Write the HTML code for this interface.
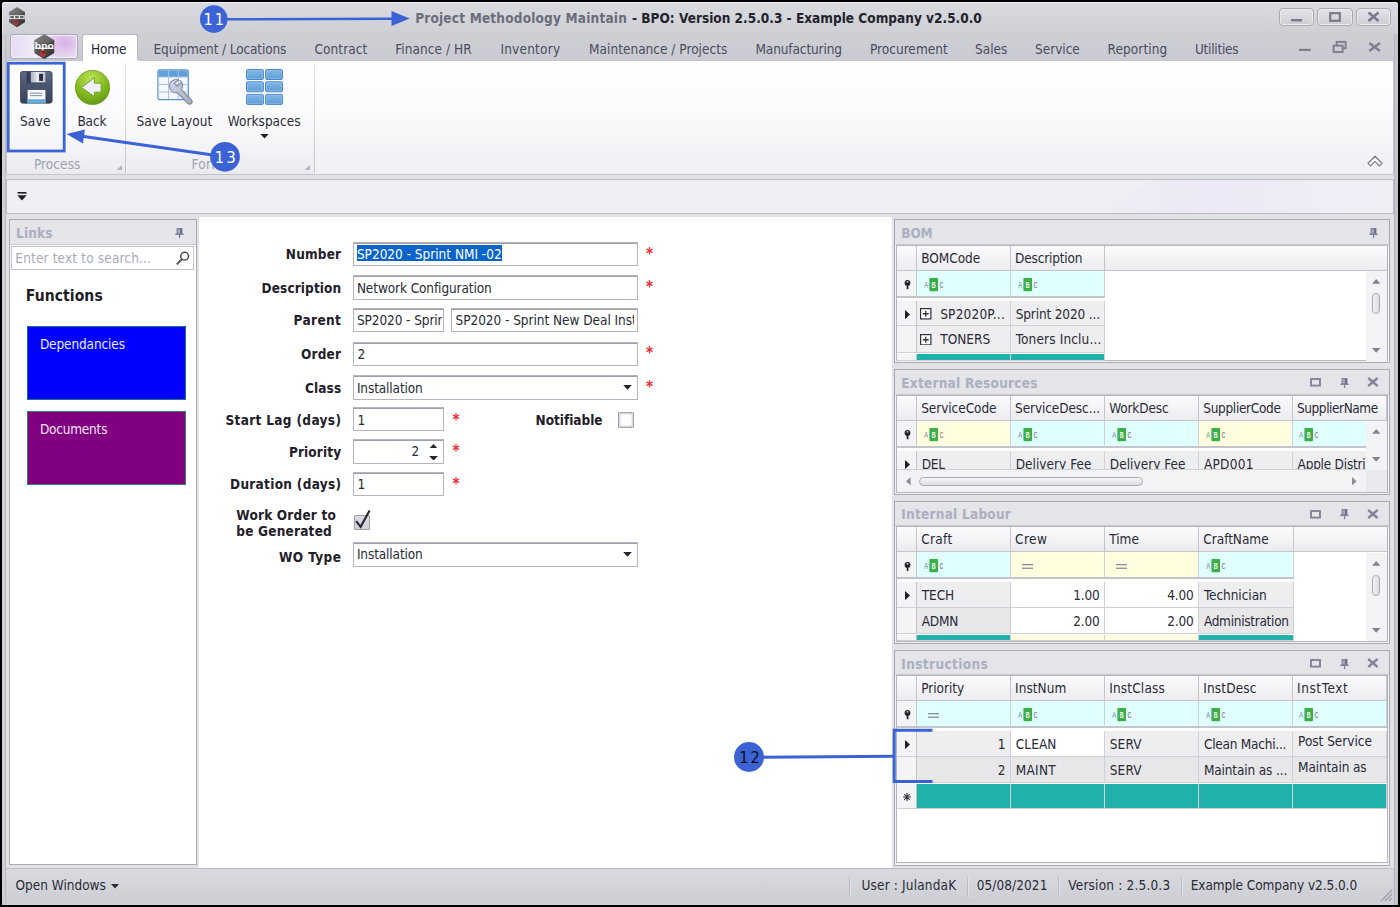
<!DOCTYPE html>
<html lang="en"><head><meta charset="utf-8"><title>Project Methodology Maintain - BPO</title>
<style>
*{box-sizing:border-box;margin:0;padding:0}
html,body{width:1400px;height:907px;overflow:hidden;background:#000}
body{font:13.5px/16px "DejaVu Sans Condensed","DejaVu Sans","Liberation Sans",sans-serif;font-stretch:condensed;color:#2a2b35;position:relative}
.a{position:absolute}
.t{position:absolute;white-space:pre;line-height:16px}
.b{font-weight:700}
.inp{background:#fff;border:1px solid #b3b4bf;box-shadow:inset 0 1px 0 #9fa0ab}
.ph{background:#e4e4e9;border-bottom:1px solid #c9cad1}
.pn{background:#f3f3f6;border:1px solid #a9aab3}
.gh{background:linear-gradient(#fbfbfd,#ececf0);border-right:1px solid #c3c4cc;border-bottom:1px solid #c3c4cc}
.cy{background:#e0ffff}.ye{background:#ffffe0}.tl{background:#20b2aa}
.c0{background:#eeeef1}.c1{background:#e7e7ea}.cw{background:#fff}
.cell{border-right:1px solid #cfd0d7;border-bottom:1px solid #cfd0d7}
</style></head>
<body>
<div id="win" class="a " style="left:2px;top:2px;width:1395.6px;height:902.6px;background:#cfd0d6;border-radius:3px 3px 0 0;overflow:hidden">
<div class="a " style="left:0px;top:0px;width:1396px;height:32px;background:linear-gradient(#dadbe0,#cecfd5)"></div>
<div class="a " style="left:0px;top:32px;width:1396px;height:27px;background:linear-gradient(#cecfd5,#cacbd2)"></div>
<div class="a " style="left:0px;top:0px;width:1396px;height:1px;background:#f0f1f4"></div>
<div class="a " style="left:0px;top:0px;width:1px;height:903px;background:#e6e7eb"></div>
<div class="a " style="left:1391.5px;top:32px;width:4.5px;height:871px;background:#c4c5cc;border-left:1px solid #b4b5bd"></div>
<div class="a " style="left:0px;top:32px;width:4px;height:871px;background:#cfd0d6;border-right:1px solid #b9bac2"></div>
<div class="a " style="left:4px;top:172.5px;width:1388px;height:693.5px;background:#e1e2e6"></div>
</div>
<div id="title" class="a " style="left:2px;top:2px;width:1396px;height:32px;">
<svg class="a" style="left:6.4px;top:5.2px" width="18" height="20.4" viewBox="0 0 100 100" preserveAspectRatio="none"><defs><linearGradient id="hxa" x1="0" y1="0" x2="1" y2="1"><stop offset="0" stop-color="#8c8c8c"/><stop offset=".45" stop-color="#505050"/><stop offset="1" stop-color="#303030"/></linearGradient></defs><polygon points="50,1 94,25 94,75 50,99 6,75 6,25" fill="url(#hxa)"/><polygon points="50,1 94,25 50,42 6,25" fill="#7d7d7d" opacity=".5"/><rect x="7" y="40" width="86" height="19" fill="#e4e4e4"/><rect x="13" y="44.500" width="19" height="10" fill="#5a5a5a"/><rect x="40" y="44.500" width="19" height="10" fill="#5a5a5a"/><rect x="67" y="44.500" width="19" height="10" fill="#5a5a5a"/><path d="M30 64h26v22l-10 6-16-8z" fill="#a83a3c"/><path d="M40 66l6 10 6-10" stroke="#5c2022" stroke-width="4" fill="none"/></svg>
<span class="t b" style="left:413.2px;top:7.63px;letter-spacing:0.197px;color:#6b6c7a;">Project Methodology Maintain</span>
<span class="t b" style="left:630px;top:7.63px;letter-spacing:0.018px;color:#23232d;">- BPO: Version 2.5.0.3 - Example Company v2.5.0.0</span>
<div class="a " style="left:1276.5px;top:6px;width:35px;height:18px;border:1px solid #a9aab5;border-radius:4px;background:linear-gradient(#e3e4e9,#cdced5);box-shadow:inset 0 0 0 1px #ebecf0"></div>
<svg class="a" style="left:1276.5px;top:6px" width="35" height="18" viewBox="0 0 35 18"><rect x="12" y="11" width="11" height="2.4" fill="#787989"/></svg>
<div class="a " style="left:1315px;top:6px;width:35.5px;height:18px;border:1px solid #a9aab5;border-radius:4px;background:linear-gradient(#e3e4e9,#cdced5);box-shadow:inset 0 0 0 1px #ebecf0"></div>
<svg class="a" style="left:1315px;top:6px" width="35.5" height="18" viewBox="0 0 35.5 18"><rect x="13.2" y="5.2" width="9.6" height="7.6" fill="none" stroke="#787989" stroke-width="2.2"/></svg>
<div class="a " style="left:1353.5px;top:6px;width:35px;height:18px;border:1px solid #a9aab5;border-radius:4px;background:linear-gradient(#e3e4e9,#cdced5);box-shadow:inset 0 0 0 1px #ebecf0"></div>
<svg class="a" style="left:1353.5px;top:6px" width="35" height="18" viewBox="0 0 35 18"><path d="M12.5 4.5l10 8.5M22.5 4.5l-10 8.5" stroke="#787989" stroke-width="2.6" fill="none"/></svg>
</div>
<div id="tabs" class="a " style="left:2px;top:34px;width:1396px;height:27px;">
<div class="a " style="left:7.6px;top:0.4px;width:68.6px;height:24.6px;border:1px solid #a9a9b6;border-radius:3px;background:radial-gradient(ellipse 22px 16px at 82% 35%,#d9b4e6,rgba(217,180,230,0) 100%),linear-gradient(100deg,#e4dbf2,#f1ecf8 40%,#e6d6f0 70%,#ece4f6);box-shadow:inset 0 0 0 1px #f3eef8"></div>
<svg class="a" style="left:30.6px;top:-0.4px" width="22.6" height="25.4" viewBox="0 0 100 100" preserveAspectRatio="none"><defs><linearGradient id="hxb" x1="0" y1="0" x2="1" y2="1"><stop offset="0" stop-color="#8c8c8c"/><stop offset=".45" stop-color="#505050"/><stop offset="1" stop-color="#303030"/></linearGradient></defs><polygon points="50,1 94,25 94,75 50,99 6,75 6,25" fill="url(#hxb)"/><polygon points="50,1 94,25 50,42 6,25" fill="#7d7d7d" opacity=".5"/><text x="50" y="59" font-family="Liberation Sans,DejaVu Sans,sans-serif" font-weight="700" font-size="34" fill="#fff" text-anchor="middle" textLength="84" lengthAdjust="spacingAndGlyphs">bpo</text><rect x="8" y="54" width="84" height="4.500" fill="#fff"/><path d="M30 64h26v22l-10 6-16-8z" fill="#a83a3c"/><path d="M40 66l6 10 6-10" stroke="#5c2022" stroke-width="4" fill="none"/></svg>
<div class="a " style="left:80px;top:0.2px;width:56.3px;height:26.8px;background:#fff;border:1px solid #b9bac3;border-bottom:none;border-radius:3px 3px 0 0"></div>
<span class="t" style="left:89px;top:7.03px;letter-spacing:-0.144px;color:#26273f;">Home</span>
<span class="t" style="left:151.5px;top:7.03px;letter-spacing:-0.125px;color:#4b4c5e;">Equipment / Locations</span>
<span class="t" style="left:312.4px;top:7.03px;letter-spacing:0.094px;color:#4b4c5e;">Contract</span>
<span class="t" style="left:393.2px;top:7.03px;letter-spacing:0.061px;color:#4b4c5e;">Finance / HR</span>
<span class="t" style="left:498.4px;top:7.03px;letter-spacing:0.209px;color:#4b4c5e;">Inventory</span>
<span class="t" style="left:587.1px;top:7.03px;letter-spacing:0.015px;color:#4b4c5e;">Maintenance / Projects</span>
<span class="t" style="left:753.5px;top:7.03px;letter-spacing:-0.119px;color:#4b4c5e;">Manufacturing</span>
<span class="t" style="left:867.9px;top:7.03px;letter-spacing:0.034px;color:#4b4c5e;">Procurement</span>
<span class="t" style="left:973px;top:7.03px;letter-spacing:-0.009px;color:#4b4c5e;">Sales</span>
<span class="t" style="left:1033px;top:7.03px;letter-spacing:-0.013px;color:#4b4c5e;">Service</span>
<span class="t" style="left:1105.5px;top:7.03px;letter-spacing:0.091px;color:#4b4c5e;">Reporting</span>
<span class="t" style="left:1193px;top:7.03px;letter-spacing:-0.269px;color:#4b4c5e;">Utilities</span>
<svg class="a" style="left:1293px;top:4px" width="95" height="18" viewBox="0 0 95 18"><rect x="4" y="10.8" width="11.6" height="2.2" fill="#7d7e8e"/><g fill="none" stroke="#7d7e8e" stroke-width="1.9"><rect x="41.6" y="3.9" width="9" height="6.4"/><rect x="38.6" y="7.6" width="9" height="6.4" fill="#cccdd3"/></g><path d="M74.3 5l10.6 8M84.9 5l-10.6 8" stroke="#7d7e8e" stroke-width="2.3" fill="none"/></svg>
</div>
<div id="ribbon" class="a " style="left:6px;top:60px;width:1388px;height:114.5px;background:linear-gradient(#ffffff,#fbfbfd 45%,#efeff4);border:1px solid #c3c4cc">
<div class="a " style="left:76px;top:-1px;width:54.5px;height:1px;background:#fff"></div>
<div class="a " style="left:0px;top:92.5px;width:118px;height:20.5px;background:linear-gradient(#f1f1f5,#eaeaf0)"></div>
<div class="a " style="left:119.5px;top:92.5px;width:187.5px;height:20.5px;background:linear-gradient(#f1f1f5,#eaeaf0)"></div>
<div class="a " style="left:118.2px;top:2px;width:1px;height:110px;background:linear-gradient(#e4e4ea,#c2c3cb)"></div>
<div class="a " style="left:307px;top:2px;width:1px;height:110px;background:linear-gradient(#e4e4ea,#c2c3cb)"></div>
<svg class="a" style="left:13px;top:10px" width="32.5" height="32.6" viewBox="0 0 32 32"><defs><linearGradient id="fl" x1="0" y1="0" x2="0" y2="1"><stop offset="0" stop-color="#5e6a86"/><stop offset=".45" stop-color="#4a5570"/><stop offset="1" stop-color="#38425a"/></linearGradient>
<linearGradient id="fm" x1="0" y1="0" x2="1" y2="0"><stop offset="0" stop-color="#aab0bd"/><stop offset=".45" stop-color="#e9ebf0"/><stop offset="1" stop-color="#c5c9d3"/></linearGradient></defs>
<rect x="0.4" y="0.4" width="31.2" height="31.2" rx="2.3" fill="url(#fl)" stroke="#333c52" stroke-width=".8"/>
<rect x="6.4" y="0.8" width="18.6" height="11.2" fill="#333d55"/><rect x="10.6" y="0.8" width="14.4" height="10.4" fill="url(#fm)"/><rect x="18.8" y="2.7" width="3.9" height="7" fill="#2a3146"/>
<rect x="7.5" y="18.6" width="17.5" height="13" fill="#f5f7fb"/><rect x="7.5" y="27.8" width="17.5" height="3.8" fill="#60a9da"/><rect x="10" y="21.2" width="12" height="1.1" fill="#8e97b3"/><rect x="10" y="23.6" width="12" height="1.1" fill="#8e97b3"/></svg>
<svg class="a" style="left:68px;top:8.9px" width="35" height="35" viewBox="0 0 35 35"><defs><radialGradient id="gb" cx=".45" cy=".25" r=".8"><stop offset="0" stop-color="#bde25a"/><stop offset=".55" stop-color="#86bd22"/><stop offset="1" stop-color="#5f9311"/></radialGradient></defs>
<circle cx="17.5" cy="17.5" r="17.1" fill="url(#gb)" stroke="#6a9c18" stroke-width=".8"/><path d="M6.5 17.5L19.4 7.7V13.2H26.1V22.2H19.4V26.6Z" fill="#eef1fa" stroke="#6b9b1b" stroke-width=".9" stroke-linejoin="round"/></svg>
<svg class="a" style="left:150px;top:7.5px" width="36" height="36" viewBox="0 0 36 36"><defs><linearGradient id="wr" x1="0" y1="0" x2="1" y2="1"><stop offset="0" stop-color="#d3d9e4"/><stop offset="1" stop-color="#a4adbf"/></linearGradient></defs>
<rect x="0.9" y="0.9" width="30.4" height="29.8" rx="1.8" fill="#f4f7fc" stroke="#5f8fcc" stroke-width="1.2"/><path d="M1.5 2.3a.9 .9 0 0 1 .9-.9H29.8a.9 .9 0 0 1 .9 .9V8H1.5z" fill="#5f9fdc"/>
<path d="M11.6 1.5V30M21.3 1.5V30M1.5 8H30.7M1.5 15.5H30.7M1.5 23H30.7" stroke="#a9c1e2" stroke-width="1"/>
<path d="M24.6 13.2a6.6 6.6 0 1 0 -4.300 10.400L30.800 34.400a2.500 2.500 0 0 0 3.600 -3.600L24.100 20.300a6.600 6.600 0 0 0 .500 -7.100L20.400 17.300L17.300 14.300L21.600 10.400" fill="url(#wr)" stroke="#7d879c" stroke-width="1.1" stroke-linejoin="round"/></svg>
<svg class="a" style="left:239.3px;top:7.8px" width="37" height="36.5" viewBox="0 0 37 36.5"><defs><linearGradient id="wg" x1="0" y1="0" x2="0" y2="1"><stop offset="0" stop-color="#86b9e6"/><stop offset="1" stop-color="#5a9bd6"/></linearGradient></defs><rect x="0.5" y="0.5" width="16.9" height="10" rx="1.2" fill="url(#wg)" stroke="#4a88c8" stroke-width="1"/><rect x="1.5" y="1.5" width="14.9" height="8" rx=".6" fill="none" stroke="#9cc6ec" stroke-width=".7" opacity=".8"/><rect x="19.6" y="0.5" width="16.9" height="10" rx="1.2" fill="url(#wg)" stroke="#4a88c8" stroke-width="1"/><rect x="20.6" y="1.5" width="14.9" height="8" rx=".6" fill="none" stroke="#9cc6ec" stroke-width=".7" opacity=".8"/><rect x="0.5" y="12.8" width="16.9" height="10" rx="1.2" fill="url(#wg)" stroke="#4a88c8" stroke-width="1"/><rect x="1.5" y="13.8" width="14.9" height="8" rx=".6" fill="none" stroke="#9cc6ec" stroke-width=".7" opacity=".8"/><rect x="19.6" y="12.8" width="16.9" height="10" rx="1.2" fill="url(#wg)" stroke="#4a88c8" stroke-width="1"/><rect x="20.6" y="13.8" width="14.9" height="8" rx=".6" fill="none" stroke="#9cc6ec" stroke-width=".7" opacity=".8"/><rect x="0.5" y="25.4" width="16.9" height="10" rx="1.2" fill="url(#wg)" stroke="#4a88c8" stroke-width="1"/><rect x="1.5" y="26.4" width="14.9" height="8" rx=".6" fill="none" stroke="#9cc6ec" stroke-width=".7" opacity=".8"/><rect x="19.6" y="25.4" width="16.9" height="10" rx="1.2" fill="url(#wg)" stroke="#4a88c8" stroke-width="1"/><rect x="20.6" y="26.4" width="14.9" height="8" rx=".6" fill="none" stroke="#9cc6ec" stroke-width=".7" opacity=".8"/></svg>
<span class="t" style="left:12.9px;top:52.33px;letter-spacing:0.243px;">Save</span>
<span class="t" style="left:70.4px;top:52.33px;letter-spacing:-0.125px;">Back</span>
<span class="t" style="left:129.5px;top:52.33px;letter-spacing:0.077px;">Save Layout</span>
<span class="t" style="left:220.8px;top:52.33px;letter-spacing:0.016px;">Workspaces</span>
<svg class="a" style="left:253px;top:73px" width="9" height="5" viewBox="0 0 9 5"><path d="M0.3 0h8.4L4.5 4.6z" fill="#22232b"/></svg>
<span class="t" style="left:26.9px;top:94.53px;letter-spacing:0.081px;color:#9fa1b0;">Process</span>
<span class="t" style="left:184.5px;top:94.53px;letter-spacing:0.317px;color:#9fa1b0;">Form</span>
<svg class="a" style="left:108.5px;top:103.5px" width="6" height="5.5" viewBox="0 0 6 5.5"><path d="M6 0V5.5H0z" fill="#b4b5c0"/></svg>
<svg class="a" style="left:297px;top:103.5px" width="6" height="5.5" viewBox="0 0 6 5.5"><path d="M6 0V5.5H0z" fill="#b4b5c0"/></svg>
<svg class="a" style="left:1360.3px;top:93.6px" width="16" height="12.5" viewBox="0 0 16 12.5"><path d="M1 8.2L8 1.2L15 8.2L12.4 10.9L8 6.4L3.6 10.9Z" fill="#fbfbfd" stroke="#7a7b8a" stroke-width="1.3" stroke-linejoin="round"/></svg>
</div>
<div id="qat" class="a " style="left:6px;top:179px;width:1388px;height:34.5px;background:#efeff4;border:1px solid #b9bac2;overflow:hidden">
<svg class="a" style="left:10px;top:12px" width="10" height="8.5" viewBox="0 0 10 8.5"><rect x="0.5" y="0" width="9" height="1.6" fill="#1f2028"/><path d="M0.3 3.2h9.4L5 8.4z" fill="#1f2028"/></svg>
<svg class="a" style="left:1033px;top:0px" width="353" height="33" viewBox="0 0 353 33"><defs><linearGradient id="sw" x1="0" y1="0" x2="1" y2="0"><stop offset="0" stop-color="#e6d9f3" stop-opacity="0"/><stop offset=".4" stop-color="#ece3f6" stop-opacity=".55"/><stop offset="1" stop-color="#f3eef9" stop-opacity=".35"/></linearGradient></defs><path d="M60 33L110 0H353V33Z" fill="url(#sw)"/></svg>
</div>
<div id="links" class="a pn" style="left:9px;top:219px;width:187.5px;height:645.7px;background:#fff">
<div class="a ph" style="left:0px;top:0px;width:185.5px;height:25px;"></div>
<span class="t b" style="left:6px;top:5.03px;letter-spacing:0.188px;color:#abafc0;">Links</span>
<svg class="a" style="left:165px;top:7.8px" width="9" height="10.5" viewBox="0 0 9 10.5"><rect x="2.1" y="0.6" width="4.8" height="5.2" fill="#a9aabb" stroke="#80819a" stroke-width="1.1"/><rect x="5" y="0.6" width="1.9" height="5.2" fill="#6c6d80"/><rect x="0.3" y="5.6" width="8.4" height="1.4" fill="#80819a"/><rect x="3.9" y="7" width="1.3" height="3.3" fill="#80819a"/></svg>
<div class="a inp" style="left:1px;top:25.5px;width:183px;height:24px;border-color:#c0c1ca;box-shadow:none"></div>
<span class="t" style="left:5.3px;top:29.73px;letter-spacing:0.157px;color:#a9aab9;">Enter text to search...</span>
<svg class="a" style="left:165.5px;top:30.5px" width="14" height="14" viewBox="0 0 14 14"><circle cx="8.6" cy="5.2" r="3.9" fill="none" stroke="#4b4c5a" stroke-width="1.5"/><path d="M5.9 8.2L0.8 13.3" stroke="#4b4c5a" stroke-width="1.9"/></svg>
<span class="t b" style="left:15.8px;top:68.14px;font-size:15.5px;letter-spacing:0.095px;color:#1d1d26;">Functions</span>
<div class="a " style="left:16.5px;top:105.5px;width:159.5px;height:74.3px;background:#0000ff;border:1px solid #1c6f86"></div>
<span class="t" style="left:29.9px;top:115.73px;letter-spacing:-0.120px;color:#e9ecff;">Dependancies</span>
<div class="a " style="left:16.5px;top:190.7px;width:159.5px;height:74.3px;background:#800080;border:1px solid #2f7f77"></div>
<span class="t" style="left:29.9px;top:201.23px;letter-spacing:-0.207px;color:#f6e6f6;">Documents</span>
</div>
<div id="form" class="a " style="left:198.5px;top:216.5px;width:693px;height:652px;background:#fff">
<span class="t b" style="left:87.3px;top:29.53px;letter-spacing:0.182px;color:#1f2029;">Number</span>
<span class="t b" style="left:63px;top:63.13px;letter-spacing:0.112px;color:#1f2029;">Description</span>
<span class="t b" style="left:95px;top:95.83px;letter-spacing:0.396px;color:#1f2029;">Parent</span>
<span class="t b" style="left:102.4px;top:129.53px;letter-spacing:0.230px;color:#1f2029;">Order</span>
<span class="t b" style="left:106.4px;top:163.23px;letter-spacing:0.133px;color:#1f2029;">Class</span>
<span class="t b" style="left:26.9px;top:195.63px;letter-spacing:0.346px;color:#1f2029;">Start Lag (days)</span>
<span class="t b" style="left:90.4px;top:227.03px;letter-spacing:0.140px;color:#1f2029;">Priority</span>
<span class="t b" style="left:31.5px;top:259.13px;letter-spacing:0.298px;color:#1f2029;">Duration (days)</span>
<span class="t b" style="left:80.5px;top:332.63px;letter-spacing:0.402px;color:#1f2029;">WO Type</span>
<span class="t b" style="left:37.8px;top:290.53px;letter-spacing:0.193px;color:#1f2029;">Work Order to</span>
<span class="t b" style="left:37.8px;top:306.83px;letter-spacing:0.209px;color:#1f2029;">be Generated</span>
<span class="t b" style="left:337px;top:195.23px;letter-spacing:-0.018px;color:#1f2029;">Notifiable</span>
<div class="a inp" style="left:154.5px;top:25px;width:284.5px;height:24.5px;"></div>
<div class="a inp" style="left:154.5px;top:58.8px;width:284.5px;height:24.5px;"></div>
<div class="a inp" style="left:154.5px;top:91.3px;width:91px;height:24.5px;"></div>
<div class="a inp" style="left:252.8px;top:91.3px;width:186.5px;height:24.5px;"></div>
<div class="a inp" style="left:154.5px;top:125.5px;width:284.5px;height:24.2px;"></div>
<div class="a inp" style="left:154.5px;top:158.8px;width:284.5px;height:24.5px;"></div>
<div class="a inp" style="left:154.5px;top:190.5px;width:90.8px;height:24px;"></div>
<div class="a inp" style="left:154.5px;top:222.8px;width:90.8px;height:24.3px;"></div>
<div class="a inp" style="left:154.5px;top:255.5px;width:90.8px;height:24.4px;"></div>
<div class="a inp" style="left:154.5px;top:325.5px;width:284.5px;height:24.5px;"></div>
<div class="a " style="left:158.5px;top:28.8px;width:145.3px;height:16.2px;background:#0a63c9"></div>
<span class="t" style="left:158.4px;top:29.43px;letter-spacing:-0.008px;color:#fff;">SP2020 - Sprint NMI -02</span>
<span class="t" style="left:158.4px;top:63.03px;letter-spacing:-0.102px;">Network Configuration</span>
<div class="a " style="left:155.5px;top:92.5px;width:87.5px;height:22px;overflow:hidden">
<span class="t" style="left:2.9px;top:3.33px;letter-spacing:-0.088px;">SP2020 - Sprin</span>
</div>
<div class="a " style="left:253.8px;top:92.5px;width:181.5px;height:22px;overflow:hidden">
<span class="t" style="left:3.2px;top:3.33px;letter-spacing:-0.037px;">SP2020 - Sprint New Deal Inst</span>
</div>
<span class="t" style="left:158.9px;top:129.43px;">2</span>
<span class="t" style="left:158.4px;top:163.03px;letter-spacing:-0.122px;">Installation</span>
<span class="t" style="left:158.9px;top:195.43px;">1</span>
<span class="t" style="left:213px;top:226.83px;">2</span>
<span class="t" style="left:158.9px;top:259.03px;">1</span>
<span class="t" style="left:158.4px;top:329.63px;letter-spacing:-0.122px;">Installation</span>
<svg class="a" style="left:424.3px;top:168.7px" width="9" height="5" viewBox="0 0 9 5"><path d="M0.2 0h8.6L4.5 4.8z" fill="#22232b"/></svg>
<svg class="a" style="left:424.3px;top:335px" width="9" height="5" viewBox="0 0 9 5"><path d="M0.2 0h8.6L4.5 4.8z" fill="#22232b"/></svg>
<svg class="a" style="left:230.5px;top:227px" width="9" height="4.6" viewBox="0 0 9 4.6"><path d="M0.2 4.6h8.6L4.5 0z" fill="#22232b"/></svg>
<svg class="a" style="left:230.5px;top:239.1px" width="9" height="4.6" viewBox="0 0 9 4.6"><path d="M0.2 0h8.6L4.5 4.6z" fill="#22232b"/></svg>
<span class="t b" style="left:447.5px;top:29.01px;font-size:15px;color:#f02832;">*</span>
<span class="t b" style="left:447.5px;top:62.11px;font-size:15px;color:#f02832;">*</span>
<span class="t b" style="left:447.5px;top:128.61px;font-size:15px;color:#f02832;">*</span>
<span class="t b" style="left:447.5px;top:162.11px;font-size:15px;color:#f02832;">*</span>
<span class="t b" style="left:253.9px;top:195.51px;font-size:15px;color:#f02832;">*</span>
<span class="t b" style="left:253.9px;top:226.21px;font-size:15px;color:#f02832;">*</span>
<span class="t b" style="left:253.9px;top:259.01px;font-size:15px;color:#f02832;">*</span>
<div class="a " style="left:419.1px;top:195.5px;width:16px;height:15.8px;background:#fff;border:1px solid #a4a5b0;border-radius:1px;box-shadow:inset 0 0 0 1.5px #d9dae0"></div>
<div class="a " style="left:155.5px;top:298.2px;width:15.8px;height:15.5px;background:linear-gradient(#dcdde3,#cfd0d8);border:1px solid #9d9eaa;border-radius:1px"></div>
<svg class="a" style="left:154.5px;top:292.5px" width="20" height="21" viewBox="0 0 20 21"><path d="M3.2 12.2L7.6 17.8L16.6 1.6" fill="none" stroke="#25262f" stroke-width="2.1"/></svg>
</div>
<div id="bom" class="a pn" style="left:894px;top:219px;width:496px;height:144px;">
<div class="a ph" style="left:0px;top:0px;width:494px;height:25.2px;"></div>
<span class="t b" style="left:6.3px;top:4.53px;letter-spacing:-0.157px;color:#abafc0;">BOM</span>
<svg class="a" style="left:474px;top:7.8px" width="9" height="10.5" viewBox="0 0 9 10.5"><rect x="2.1" y="0.6" width="4.8" height="5.2" fill="#a9aabb" stroke="#80819a" stroke-width="1.1"/><rect x="5" y="0.6" width="1.9" height="5.2" fill="#6c6d80"/><rect x="0.3" y="5.6" width="8.4" height="1.4" fill="#80819a"/><rect x="3.9" y="7" width="1.3" height="3.3" fill="#80819a"/></svg>
<div class="a " style="left:1px;top:25.2px;width:492px;height:116.1px;background:#fff;border:1px solid #b4b5be"></div>
<div class="a gh" style="left:2px;top:26.2px;width:490px;height:24.8px;border-right:none"></div>
<div class="a gh" style="left:2px;top:26.2px;width:20px;height:24.8px;"></div>
<div class="a gh" style="left:22px;top:26.2px;width:93.9px;height:24.8px;"></div>
<span class="t" style="left:26.2px;top:29.83px;letter-spacing:-0.033px;">BOMCode</span>
<div class="a gh" style="left:115.9px;top:26.2px;width:94.1px;height:24.8px;"></div>
<span class="t" style="left:120.1px;top:29.83px;letter-spacing:-0.181px;">Description</span>
<div class="a gh" style="left:210px;top:26.2px;width:282px;height:24.8px;border-right:none"></div>
<div class="a " style="left:2px;top:51px;width:20px;height:27.4px;background:#f4f4f7;border-right:1px solid #c3c4cc;border-bottom:2px solid #c2c3cb"></div>
<svg class="a" style="left:8.6px;top:60.3px" width="7" height="9.5" viewBox="0 0 7 9.5"><circle cx="3.5" cy="2.9" r="2.9" fill="#23242c"/><rect x="2.7" y="4" width="1.7" height="5.2" fill="#23242c"/><circle cx="3.5" cy="1.8" r=".9" fill="#c9cad2"/></svg>
<div class="a cy" style="left:22px;top:51px;width:93.9px;height:27.4px;border-right:1px solid #cfd0d7;border-bottom:2px solid #c2c3cb"></div>
<svg class="a" style="left:28.6px;top:57.9px" width="20" height="14" viewBox="0 0 20 14"><g font-family="Liberation Mono,DejaVu Sans Mono,monospace" font-size="9.4"><text x="0.3" y="10" fill="#6f7180" textLength="3.9" lengthAdjust="spacingAndGlyphs">A</text><rect x="5.4" y="-0.2" width="8.6" height="13.4" rx="1.3" fill="#3cae47"/><text x="7.6" y="9.9" fill="#e8f6e9" font-weight="700" textLength="4.2" lengthAdjust="spacingAndGlyphs">B</text><text x="15.4" y="10" fill="#6f7180" textLength="3.9" lengthAdjust="spacingAndGlyphs">C</text></g></svg>
<div class="a cy" style="left:115.9px;top:51px;width:94.1px;height:27.4px;border-right:1px solid #cfd0d7;border-bottom:2px solid #c2c3cb"></div>
<svg class="a" style="left:122.5px;top:57.9px" width="20" height="14" viewBox="0 0 20 14"><g font-family="Liberation Mono,DejaVu Sans Mono,monospace" font-size="9.4"><text x="0.3" y="10" fill="#6f7180" textLength="3.9" lengthAdjust="spacingAndGlyphs">A</text><rect x="5.4" y="-0.2" width="8.6" height="13.4" rx="1.3" fill="#3cae47"/><text x="7.6" y="9.9" fill="#e8f6e9" font-weight="700" textLength="4.2" lengthAdjust="spacingAndGlyphs">B</text><text x="15.4" y="10" fill="#6f7180" textLength="3.9" lengthAdjust="spacingAndGlyphs">C</text></g></svg>
<div class="a " style="left:2px;top:81px;width:20px;height:25.4px;background:#f4f4f7;border-right:1px solid #c3c4cc;border-bottom:1px solid #cfd0d7"></div>
<svg class="a" style="left:10px;top:89.7px" width="5" height="9.2" viewBox="0 0 5 9.2"><path d="M0 0L5 4.6L0 9.2z" fill="#1d1e26"/></svg>
<div class="a cell c0" style="left:22px;top:81px;width:93.9px;height:25.4px;"></div>
<div class="a " style="left:22px;top:81px;width:92.9px;height:24.9px;overflow:hidden">
<span class="t" style="left:23.2px;top:4.93px;letter-spacing:0.207px;">SP2020P...</span>
</div>
<div class="a cell c0" style="left:115.9px;top:81px;width:94.1px;height:25.4px;"></div>
<div class="a " style="left:115.9px;top:81px;width:93.1px;height:24.9px;overflow:hidden">
<span class="t" style="left:4.8px;top:4.93px;letter-spacing:-0.149px;">Sprint 2020 ...</span>
</div>
<svg class="a" style="left:25px;top:88.4px" width="11.5" height="11.5" viewBox="0 0 11.5 11.5"><rect x="0.6" y="0.6" width="10.3" height="10.3" fill="#fff" stroke="#30313b" stroke-width="1.2"/><path d="M2.8 5.75h5.9M5.75 2.8v5.9" stroke="#30313b" stroke-width="1.3"/></svg>
<div class="a " style="left:2px;top:106.4px;width:20px;height:26.4px;background:#f4f4f7;border-right:1px solid #c3c4cc;border-bottom:1px solid #cfd0d7"></div>
<div class="a cell c0" style="left:22px;top:106.4px;width:93.9px;height:26.4px;"></div>
<div class="a " style="left:22px;top:106.4px;width:92.9px;height:25.9px;overflow:hidden">
<span class="t" style="left:23.2px;top:4.93px;letter-spacing:0.035px;">TONERS</span>
</div>
<div class="a cell c0" style="left:115.9px;top:106.4px;width:94.1px;height:26.4px;"></div>
<div class="a " style="left:115.9px;top:106.4px;width:93.1px;height:25.9px;overflow:hidden">
<span class="t" style="left:4.8px;top:4.93px;letter-spacing:0.153px;">Toners Inclu...</span>
</div>
<svg class="a" style="left:25px;top:113.8px" width="11.5" height="11.5" viewBox="0 0 11.5 11.5"><rect x="0.6" y="0.6" width="10.3" height="10.3" fill="#fff" stroke="#30313b" stroke-width="1.2"/><path d="M2.8 5.75h5.9M5.75 2.8v5.9" stroke="#30313b" stroke-width="1.3"/></svg>
<div class="a " style="left:2px;top:133.7px;width:20px;height:7.1px;background:#f4f4f7;border-right:1px solid #c3c4cc;border-bottom:1px solid #cfd0d7"></div>
<div class="a cell tl" style="left:22px;top:133.7px;width:93.9px;height:7.1px;"></div>
<div class="a cell tl" style="left:115.9px;top:133.7px;width:94.1px;height:7.1px;"></div>
<div class="a " style="left:470.5px;top:51px;width:21.5px;height:89.5px;background:#f3f3f6"></div>
<svg class="a" style="left:476.6px;top:59.2px" width="8.4" height="5" viewBox="0 0 8.4 5"><path d="M0 4.8h8.400L4.200 0z" fill="#82838f"/></svg>
<svg class="a" style="left:476.6px;top:127.5px" width="8.4" height="5" viewBox="0 0 8.4 5"><path d="M0 0h8.400L4.200 4.800z" fill="#82838f"/></svg>
<div class="a " style="left:476.6px;top:73px;width:8.6px;height:21px;border:1px solid #a9aab4;border-radius:4.5px;background:linear-gradient(90deg,#f4f4f7,#dcdde3)"></div>
</div>
<div id="ext" class="a pn" style="left:894px;top:369px;width:496px;height:126px;">
<div class="a ph" style="left:0px;top:0px;width:494px;height:25.2px;"></div>
<span class="t b" style="left:6.3px;top:4.53px;letter-spacing:0.251px;color:#abafc0;">External Resources</span>
<svg class="a" style="left:445px;top:7.8px" width="9" height="10.5" viewBox="0 0 9 10.5"><rect x="2.1" y="0.6" width="4.8" height="5.2" fill="#a9aabb" stroke="#80819a" stroke-width="1.1"/><rect x="5" y="0.6" width="1.9" height="5.2" fill="#6c6d80"/><rect x="0.3" y="5.6" width="8.4" height="1.4" fill="#80819a"/><rect x="3.9" y="7" width="1.3" height="3.3" fill="#80819a"/></svg>
<svg class="a" style="left:415px;top:8px" width="11" height="9" viewBox="0 0 11 9"><rect x="1" y="1" width="9" height="6.6" fill="none" stroke="#83849a" stroke-width="1.9"/></svg>
<svg class="a" style="left:472px;top:7.3px" width="12" height="10" viewBox="0 0 12 10"><path d="M1.2 1l9.4 8M10.6 1l-9.4 8" stroke="#83849a" stroke-width="2.3" fill="none"/></svg>
<div class="a " style="left:1px;top:25.2px;width:492px;height:97.8px;background:#fff;border:1px solid #b4b5be"></div>
<div class="a gh" style="left:2px;top:26.2px;width:490px;height:24.8px;border-right:none"></div>
<div class="a gh" style="left:2px;top:26.2px;width:20px;height:24.8px;"></div>
<div class="a gh" style="left:22px;top:26.2px;width:93.9px;height:24.8px;"></div>
<span class="t" style="left:26.2px;top:29.83px;letter-spacing:-0.064px;">ServiceCode</span>
<div class="a gh" style="left:115.9px;top:26.2px;width:94.1px;height:24.8px;"></div>
<span class="t" style="left:120.1px;top:29.83px;letter-spacing:-0.107px;">ServiceDesc...</span>
<div class="a gh" style="left:210px;top:26.2px;width:94.1px;height:24.8px;"></div>
<span class="t" style="left:214.2px;top:29.83px;letter-spacing:-0.152px;">WorkDesc</span>
<div class="a gh" style="left:304.1px;top:26.2px;width:93.7px;height:24.8px;"></div>
<span class="t" style="left:308.3px;top:29.83px;letter-spacing:-0.321px;">SupplierCode</span>
<div class="a gh" style="left:397.8px;top:26.2px;width:94.2px;height:24.8px;"></div>
<span class="t" style="left:402px;top:29.83px;letter-spacing:-0.424px;">SupplierName</span>
<div class="a " style="left:2px;top:51px;width:20px;height:27.4px;background:#f4f4f7;border-right:1px solid #c3c4cc;border-bottom:2px solid #c2c3cb"></div>
<svg class="a" style="left:8.6px;top:60.3px" width="7" height="9.5" viewBox="0 0 7 9.5"><circle cx="3.5" cy="2.9" r="2.9" fill="#23242c"/><rect x="2.7" y="4" width="1.7" height="5.2" fill="#23242c"/><circle cx="3.5" cy="1.8" r=".9" fill="#c9cad2"/></svg>
<div class="a ye" style="left:22px;top:51px;width:93.9px;height:27.4px;border-right:1px solid #cfd0d7;border-bottom:2px solid #c2c3cb"></div>
<svg class="a" style="left:28.6px;top:57.9px" width="20" height="14" viewBox="0 0 20 14"><g font-family="Liberation Mono,DejaVu Sans Mono,monospace" font-size="9.4"><text x="0.3" y="10" fill="#6f7180" textLength="3.9" lengthAdjust="spacingAndGlyphs">A</text><rect x="5.4" y="-0.2" width="8.6" height="13.4" rx="1.3" fill="#3cae47"/><text x="7.6" y="9.9" fill="#e8f6e9" font-weight="700" textLength="4.2" lengthAdjust="spacingAndGlyphs">B</text><text x="15.4" y="10" fill="#6f7180" textLength="3.9" lengthAdjust="spacingAndGlyphs">C</text></g></svg>
<div class="a cy" style="left:115.9px;top:51px;width:94.1px;height:27.4px;border-right:1px solid #cfd0d7;border-bottom:2px solid #c2c3cb"></div>
<svg class="a" style="left:122.5px;top:57.9px" width="20" height="14" viewBox="0 0 20 14"><g font-family="Liberation Mono,DejaVu Sans Mono,monospace" font-size="9.4"><text x="0.3" y="10" fill="#6f7180" textLength="3.9" lengthAdjust="spacingAndGlyphs">A</text><rect x="5.4" y="-0.2" width="8.6" height="13.4" rx="1.3" fill="#3cae47"/><text x="7.6" y="9.9" fill="#e8f6e9" font-weight="700" textLength="4.2" lengthAdjust="spacingAndGlyphs">B</text><text x="15.4" y="10" fill="#6f7180" textLength="3.9" lengthAdjust="spacingAndGlyphs">C</text></g></svg>
<div class="a cy" style="left:210px;top:51px;width:94.1px;height:27.4px;border-right:1px solid #cfd0d7;border-bottom:2px solid #c2c3cb"></div>
<svg class="a" style="left:216.6px;top:57.9px" width="20" height="14" viewBox="0 0 20 14"><g font-family="Liberation Mono,DejaVu Sans Mono,monospace" font-size="9.4"><text x="0.3" y="10" fill="#6f7180" textLength="3.9" lengthAdjust="spacingAndGlyphs">A</text><rect x="5.4" y="-0.2" width="8.6" height="13.4" rx="1.3" fill="#3cae47"/><text x="7.6" y="9.9" fill="#e8f6e9" font-weight="700" textLength="4.2" lengthAdjust="spacingAndGlyphs">B</text><text x="15.4" y="10" fill="#6f7180" textLength="3.9" lengthAdjust="spacingAndGlyphs">C</text></g></svg>
<div class="a ye" style="left:304.1px;top:51px;width:93.7px;height:27.4px;border-right:1px solid #cfd0d7;border-bottom:2px solid #c2c3cb"></div>
<svg class="a" style="left:310.7px;top:57.9px" width="20" height="14" viewBox="0 0 20 14"><g font-family="Liberation Mono,DejaVu Sans Mono,monospace" font-size="9.4"><text x="0.3" y="10" fill="#6f7180" textLength="3.9" lengthAdjust="spacingAndGlyphs">A</text><rect x="5.4" y="-0.2" width="8.6" height="13.4" rx="1.3" fill="#3cae47"/><text x="7.6" y="9.9" fill="#e8f6e9" font-weight="700" textLength="4.2" lengthAdjust="spacingAndGlyphs">B</text><text x="15.4" y="10" fill="#6f7180" textLength="3.9" lengthAdjust="spacingAndGlyphs">C</text></g></svg>
<div class="a cy" style="left:397.8px;top:51px;width:94.2px;height:27.4px;border-right:1px solid #cfd0d7;border-bottom:2px solid #c2c3cb"></div>
<svg class="a" style="left:404.4px;top:57.9px" width="20" height="14" viewBox="0 0 20 14"><g font-family="Liberation Mono,DejaVu Sans Mono,monospace" font-size="9.4"><text x="0.3" y="10" fill="#6f7180" textLength="3.9" lengthAdjust="spacingAndGlyphs">A</text><rect x="5.4" y="-0.2" width="8.6" height="13.4" rx="1.3" fill="#3cae47"/><text x="7.6" y="9.9" fill="#e8f6e9" font-weight="700" textLength="4.2" lengthAdjust="spacingAndGlyphs">B</text><text x="15.4" y="10" fill="#6f7180" textLength="3.9" lengthAdjust="spacingAndGlyphs">C</text></g></svg>
<div class="a " style="left:2px;top:81px;width:20px;height:18.5px;background:#f4f4f7;border-right:1px solid #c3c4cc;border-bottom:1px solid #cfd0d7"></div>
<svg class="a" style="left:10px;top:89.7px" width="5" height="9.2" viewBox="0 0 5 9.2"><path d="M0 0L5 4.6L0 9.2z" fill="#1d1e26"/></svg>
<div class="a cell c0" style="left:22px;top:81px;width:93.9px;height:18.5px;"></div>
<div class="a " style="left:22px;top:81px;width:92.9px;height:18px;overflow:hidden">
<span class="t" style="left:4.8px;top:4.93px;letter-spacing:-0.332px;">DEL</span>
</div>
<div class="a cell c0" style="left:115.9px;top:81px;width:94.1px;height:18.5px;"></div>
<div class="a " style="left:115.9px;top:81px;width:93.1px;height:18px;overflow:hidden">
<span class="t" style="left:4.8px;top:4.93px;letter-spacing:0.026px;">Delivery Fee</span>
</div>
<div class="a cell c0" style="left:210px;top:81px;width:94.1px;height:18.5px;"></div>
<div class="a " style="left:210px;top:81px;width:93.1px;height:18px;overflow:hidden">
<span class="t" style="left:4.8px;top:4.93px;letter-spacing:0.026px;">Delivery Fee</span>
</div>
<div class="a cell c0" style="left:304.1px;top:81px;width:93.7px;height:18.5px;"></div>
<div class="a " style="left:304.1px;top:81px;width:92.7px;height:18px;overflow:hidden">
<span class="t" style="left:4.8px;top:4.93px;letter-spacing:0.271px;">APD001</span>
</div>
<div class="a cell c0" style="left:397.8px;top:81px;width:94.2px;height:18.5px;"></div>
<div class="a " style="left:397.8px;top:81px;width:93.2px;height:18px;overflow:hidden">
<span class="t" style="left:4.8px;top:4.93px;letter-spacing:-0.235px;">Apple Distri</span>
</div>
<div class="a " style="left:470.5px;top:51px;width:21.5px;height:48.5px;background:#f3f3f6"></div>
<svg class="a" style="left:476.6px;top:59.2px" width="8.4" height="5" viewBox="0 0 8.4 5"><path d="M0 4.8h8.400L4.200 0z" fill="#82838f"/></svg>
<svg class="a" style="left:476.6px;top:86.5px" width="8.4" height="5" viewBox="0 0 8.4 5"><path d="M0 0h8.400L4.200 4.800z" fill="#82838f"/></svg>
<div class="a " style="left:2px;top:99.5px;width:490px;height:22.5px;background:#f3f3f6"></div>
<div class="a " style="left:470.5px;top:99.5px;width:21.5px;height:22.5px;background:#e9e9ee"></div>
<svg class="a" style="left:10.5px;top:106.5px" width="5" height="9" viewBox="0 0 5 9"><path d="M4.6 0v8.6L0 4.3z" fill="#8d8e9a"/></svg>
<svg class="a" style="left:456.5px;top:106.5px" width="5" height="9" viewBox="0 0 5 9"><path d="M0 0v8.6L4.6 4.3z" fill="#8d8e9a"/></svg>
<div class="a " style="left:24px;top:107.3px;width:224px;height:8.4px;border:1px solid #a9aab4;border-radius:4.5px;background:linear-gradient(#f6f6f9,#dcdde3)"></div>
</div>
<div id="lab" class="a pn" style="left:894px;top:500.5px;width:496px;height:143.5px;">
<div class="a ph" style="left:0px;top:0px;width:494px;height:24.5px;"></div>
<span class="t b" style="left:6.3px;top:4.53px;letter-spacing:0.250px;color:#abafc0;">Internal Labour</span>
<svg class="a" style="left:445px;top:7.8px" width="9" height="10.5" viewBox="0 0 9 10.5"><rect x="2.1" y="0.6" width="4.8" height="5.2" fill="#a9aabb" stroke="#80819a" stroke-width="1.1"/><rect x="5" y="0.6" width="1.9" height="5.2" fill="#6c6d80"/><rect x="0.3" y="5.6" width="8.4" height="1.4" fill="#80819a"/><rect x="3.9" y="7" width="1.3" height="3.3" fill="#80819a"/></svg>
<svg class="a" style="left:415px;top:8px" width="11" height="9" viewBox="0 0 11 9"><rect x="1" y="1" width="9" height="6.6" fill="none" stroke="#83849a" stroke-width="1.9"/></svg>
<svg class="a" style="left:472px;top:7.3px" width="12" height="10" viewBox="0 0 12 10"><path d="M1.2 1l9.4 8M10.6 1l-9.4 8" stroke="#83849a" stroke-width="2.3" fill="none"/></svg>
<div class="a " style="left:1px;top:24.5px;width:492px;height:115.8px;background:#fff;border:1px solid #b4b5be"></div>
<div class="a gh" style="left:2px;top:25.5px;width:490px;height:25.4px;border-right:none"></div>
<div class="a gh" style="left:2px;top:25.5px;width:20px;height:25.4px;"></div>
<div class="a gh" style="left:22px;top:25.5px;width:93.9px;height:25.4px;"></div>
<span class="t" style="left:26.2px;top:29.13px;letter-spacing:0.316px;">Craft</span>
<div class="a gh" style="left:115.9px;top:25.5px;width:94.1px;height:25.4px;"></div>
<span class="t" style="left:120.1px;top:29.13px;letter-spacing:0.427px;">Crew</span>
<div class="a gh" style="left:210px;top:25.5px;width:94.1px;height:25.4px;"></div>
<span class="t" style="left:214.2px;top:29.13px;letter-spacing:0.028px;">Time</span>
<div class="a gh" style="left:304.1px;top:25.5px;width:94.9px;height:25.4px;"></div>
<span class="t" style="left:308.3px;top:29.13px;letter-spacing:-0.027px;">CraftName</span>
<div class="a gh" style="left:399px;top:25.5px;width:93px;height:25.4px;border-right:none"></div>
<div class="a " style="left:2px;top:50.9px;width:20px;height:26.6px;background:#f4f4f7;border-right:1px solid #c3c4cc;border-bottom:2px solid #c2c3cb"></div>
<svg class="a" style="left:8.6px;top:60.2px" width="7" height="9.5" viewBox="0 0 7 9.5"><circle cx="3.5" cy="2.9" r="2.9" fill="#23242c"/><rect x="2.7" y="4" width="1.7" height="5.2" fill="#23242c"/><circle cx="3.5" cy="1.8" r=".9" fill="#c9cad2"/></svg>
<div class="a cy" style="left:22px;top:50.9px;width:93.9px;height:26.6px;border-right:1px solid #cfd0d7;border-bottom:2px solid #c2c3cb"></div>
<svg class="a" style="left:28.6px;top:57.8px" width="20" height="14" viewBox="0 0 20 14"><g font-family="Liberation Mono,DejaVu Sans Mono,monospace" font-size="9.4"><text x="0.3" y="10" fill="#6f7180" textLength="3.9" lengthAdjust="spacingAndGlyphs">A</text><rect x="5.4" y="-0.2" width="8.6" height="13.4" rx="1.3" fill="#3cae47"/><text x="7.6" y="9.9" fill="#e8f6e9" font-weight="700" textLength="4.2" lengthAdjust="spacingAndGlyphs">B</text><text x="15.4" y="10" fill="#6f7180" textLength="3.9" lengthAdjust="spacingAndGlyphs">C</text></g></svg>
<div class="a ye" style="left:115.9px;top:50.9px;width:94.1px;height:26.6px;border-right:1px solid #cfd0d7;border-bottom:2px solid #c2c3cb"></div>
<svg class="a" style="left:126.9px;top:62.3px" width="11" height="5" viewBox="0 0 11 5"><rect x="0" y="0" width="11" height="1.3" fill="#8b8d99"/><rect x="0" y="3.6" width="11" height="1.3" fill="#8b8d99"/></svg>
<div class="a ye" style="left:210px;top:50.9px;width:94.1px;height:26.6px;border-right:1px solid #cfd0d7;border-bottom:2px solid #c2c3cb"></div>
<svg class="a" style="left:221px;top:62.3px" width="11" height="5" viewBox="0 0 11 5"><rect x="0" y="0" width="11" height="1.3" fill="#8b8d99"/><rect x="0" y="3.6" width="11" height="1.3" fill="#8b8d99"/></svg>
<div class="a cy" style="left:304.1px;top:50.9px;width:94.9px;height:26.6px;border-right:1px solid #cfd0d7;border-bottom:2px solid #c2c3cb"></div>
<svg class="a" style="left:310.7px;top:57.8px" width="20" height="14" viewBox="0 0 20 14"><g font-family="Liberation Mono,DejaVu Sans Mono,monospace" font-size="9.4"><text x="0.3" y="10" fill="#6f7180" textLength="3.9" lengthAdjust="spacingAndGlyphs">A</text><rect x="5.4" y="-0.2" width="8.6" height="13.4" rx="1.3" fill="#3cae47"/><text x="7.6" y="9.9" fill="#e8f6e9" font-weight="700" textLength="4.2" lengthAdjust="spacingAndGlyphs">B</text><text x="15.4" y="10" fill="#6f7180" textLength="3.9" lengthAdjust="spacingAndGlyphs">C</text></g></svg>
<div class="a " style="left:2px;top:80.8px;width:20px;height:25.9px;background:#f4f4f7;border-right:1px solid #c3c4cc;border-bottom:1px solid #cfd0d7"></div>
<svg class="a" style="left:10px;top:89.5px" width="5" height="9.2" viewBox="0 0 5 9.2"><path d="M0 0L5 4.6L0 9.2z" fill="#1d1e26"/></svg>
<div class="a cell c0" style="left:22px;top:80.8px;width:93.9px;height:25.9px;"></div>
<div class="a " style="left:22px;top:80.8px;width:92.9px;height:25.4px;overflow:hidden">
<span class="t" style="left:4.8px;top:4.93px;letter-spacing:-0.105px;">TECH</span>
</div>
<div class="a cell cw" style="left:115.9px;top:80.8px;width:94.1px;height:25.9px;"></div>
<div class="a " style="left:115.9px;top:80.8px;width:93.1px;height:25.4px;overflow:hidden">
<span class="t" style="left:62.3px;top:4.93px;letter-spacing:-0.187px;">1.00</span>
</div>
<div class="a cell cw" style="left:210px;top:80.8px;width:94.1px;height:25.9px;"></div>
<div class="a " style="left:210px;top:80.8px;width:93.1px;height:25.4px;overflow:hidden">
<span class="t" style="left:62.3px;top:4.93px;letter-spacing:-0.187px;">4.00</span>
</div>
<div class="a cell c0" style="left:304.1px;top:80.8px;width:94.9px;height:25.9px;"></div>
<div class="a " style="left:304.1px;top:80.8px;width:93.9px;height:25.4px;overflow:hidden">
<span class="t" style="left:4.8px;top:4.93px;letter-spacing:-0.045px;">Technician</span>
</div>
<div class="a " style="left:2px;top:106.7px;width:20px;height:26px;background:#f4f4f7;border-right:1px solid #c3c4cc;border-bottom:1px solid #cfd0d7"></div>
<div class="a cell c1" style="left:22px;top:106.7px;width:93.9px;height:26px;"></div>
<div class="a " style="left:22px;top:106.7px;width:92.9px;height:25.5px;overflow:hidden">
<span class="t" style="left:4.8px;top:4.93px;letter-spacing:-0.234px;">ADMN</span>
</div>
<div class="a cell cw" style="left:115.9px;top:106.7px;width:94.1px;height:26px;"></div>
<div class="a " style="left:115.9px;top:106.7px;width:93.1px;height:25.5px;overflow:hidden">
<span class="t" style="left:62.3px;top:4.93px;letter-spacing:-0.187px;">2.00</span>
</div>
<div class="a cell cw" style="left:210px;top:106.7px;width:94.1px;height:26px;"></div>
<div class="a " style="left:210px;top:106.7px;width:93.1px;height:25.5px;overflow:hidden">
<span class="t" style="left:62.3px;top:4.93px;letter-spacing:-0.187px;">2.00</span>
</div>
<div class="a cell c1" style="left:304.1px;top:106.7px;width:94.9px;height:26px;"></div>
<div class="a " style="left:304.1px;top:106.7px;width:93.9px;height:25.5px;overflow:hidden">
<span class="t" style="left:4.8px;top:4.93px;letter-spacing:-0.290px;">Administration</span>
</div>
<div class="a " style="left:2px;top:133.5px;width:20px;height:6.3px;background:#f4f4f7;border-right:1px solid #c3c4cc;border-bottom:1px solid #cfd0d7"></div>
<div class="a cell tl" style="left:22px;top:133.5px;width:93.9px;height:6.3px;"></div>
<div class="a cell ye" style="left:115.9px;top:133.5px;width:94.1px;height:6.3px;"></div>
<div class="a cell ye" style="left:210px;top:133.5px;width:94.1px;height:6.3px;"></div>
<div class="a cell tl" style="left:304.1px;top:133.5px;width:94.9px;height:6.3px;"></div>
<div class="a " style="left:470.5px;top:51px;width:21.5px;height:88.5px;background:#f3f3f6"></div>
<svg class="a" style="left:476.6px;top:59.2px" width="8.4" height="5" viewBox="0 0 8.4 5"><path d="M0 4.8h8.400L4.200 0z" fill="#82838f"/></svg>
<svg class="a" style="left:476.6px;top:126.5px" width="8.4" height="5" viewBox="0 0 8.4 5"><path d="M0 0h8.400L4.200 4.800z" fill="#82838f"/></svg>
<div class="a " style="left:476.6px;top:73px;width:8.6px;height:21px;border:1px solid #a9aab4;border-radius:4.5px;background:linear-gradient(90deg,#f4f4f7,#dcdde3)"></div>
</div>
<div id="ins" class="a pn" style="left:894px;top:650px;width:496px;height:216px;">
<div class="a ph" style="left:0px;top:0px;width:494px;height:24px;"></div>
<span class="t b" style="left:6.3px;top:4.53px;letter-spacing:0.380px;color:#abafc0;">Instructions</span>
<svg class="a" style="left:445px;top:7.8px" width="9" height="10.5" viewBox="0 0 9 10.5"><rect x="2.1" y="0.6" width="4.8" height="5.2" fill="#a9aabb" stroke="#80819a" stroke-width="1.1"/><rect x="5" y="0.6" width="1.9" height="5.2" fill="#6c6d80"/><rect x="0.3" y="5.6" width="8.4" height="1.4" fill="#80819a"/><rect x="3.9" y="7" width="1.3" height="3.3" fill="#80819a"/></svg>
<svg class="a" style="left:415px;top:8px" width="11" height="9" viewBox="0 0 11 9"><rect x="1" y="1" width="9" height="6.6" fill="none" stroke="#83849a" stroke-width="1.9"/></svg>
<svg class="a" style="left:472px;top:7.3px" width="12" height="10" viewBox="0 0 12 10"><path d="M1.2 1l9.4 8M10.6 1l-9.4 8" stroke="#83849a" stroke-width="2.3" fill="none"/></svg>
<div class="a " style="left:1px;top:24px;width:492px;height:188px;background:#fff;border:1px solid #b4b5be"></div>
<div class="a gh" style="left:2px;top:25px;width:490px;height:25.1px;border-right:none"></div>
<div class="a gh" style="left:2px;top:25px;width:20px;height:25.1px;"></div>
<div class="a gh" style="left:22px;top:25px;width:93.9px;height:25.1px;"></div>
<span class="t" style="left:26.2px;top:28.63px;letter-spacing:-0.013px;">Priority</span>
<div class="a gh" style="left:115.9px;top:25px;width:94.1px;height:25.1px;"></div>
<span class="t" style="left:120.1px;top:28.63px;letter-spacing:0.031px;">InstNum</span>
<div class="a gh" style="left:210px;top:25px;width:94.1px;height:25.1px;"></div>
<span class="t" style="left:214.2px;top:28.63px;letter-spacing:0.164px;">InstClass</span>
<div class="a gh" style="left:304.1px;top:25px;width:93.7px;height:25.1px;"></div>
<span class="t" style="left:308.3px;top:28.63px;letter-spacing:0.137px;">InstDesc</span>
<div class="a gh" style="left:397.8px;top:25px;width:94.2px;height:25.1px;"></div>
<span class="t" style="left:402px;top:28.63px;letter-spacing:0.579px;">InstText</span>
<div class="a " style="left:2px;top:50.1px;width:20px;height:26.7px;background:#f4f4f7;border-right:1px solid #c3c4cc;border-bottom:2px solid #c2c3cb"></div>
<svg class="a" style="left:8.6px;top:59.4px" width="7" height="9.5" viewBox="0 0 7 9.5"><circle cx="3.5" cy="2.9" r="2.9" fill="#23242c"/><rect x="2.7" y="4" width="1.7" height="5.2" fill="#23242c"/><circle cx="3.5" cy="1.8" r=".9" fill="#c9cad2"/></svg>
<div class="a cy" style="left:22px;top:50.1px;width:93.9px;height:26.7px;border-right:1px solid #cfd0d7;border-bottom:2px solid #c2c3cb"></div>
<svg class="a" style="left:33px;top:61.5px" width="11" height="5" viewBox="0 0 11 5"><rect x="0" y="0" width="11" height="1.3" fill="#8b8d99"/><rect x="0" y="3.6" width="11" height="1.3" fill="#8b8d99"/></svg>
<div class="a cy" style="left:115.9px;top:50.1px;width:94.1px;height:26.7px;border-right:1px solid #cfd0d7;border-bottom:2px solid #c2c3cb"></div>
<svg class="a" style="left:122.5px;top:57px" width="20" height="14" viewBox="0 0 20 14"><g font-family="Liberation Mono,DejaVu Sans Mono,monospace" font-size="9.4"><text x="0.3" y="10" fill="#6f7180" textLength="3.9" lengthAdjust="spacingAndGlyphs">A</text><rect x="5.4" y="-0.2" width="8.6" height="13.4" rx="1.3" fill="#3cae47"/><text x="7.6" y="9.9" fill="#e8f6e9" font-weight="700" textLength="4.2" lengthAdjust="spacingAndGlyphs">B</text><text x="15.4" y="10" fill="#6f7180" textLength="3.9" lengthAdjust="spacingAndGlyphs">C</text></g></svg>
<div class="a cy" style="left:210px;top:50.1px;width:94.1px;height:26.7px;border-right:1px solid #cfd0d7;border-bottom:2px solid #c2c3cb"></div>
<svg class="a" style="left:216.6px;top:57px" width="20" height="14" viewBox="0 0 20 14"><g font-family="Liberation Mono,DejaVu Sans Mono,monospace" font-size="9.4"><text x="0.3" y="10" fill="#6f7180" textLength="3.9" lengthAdjust="spacingAndGlyphs">A</text><rect x="5.4" y="-0.2" width="8.6" height="13.4" rx="1.3" fill="#3cae47"/><text x="7.6" y="9.9" fill="#e8f6e9" font-weight="700" textLength="4.2" lengthAdjust="spacingAndGlyphs">B</text><text x="15.4" y="10" fill="#6f7180" textLength="3.9" lengthAdjust="spacingAndGlyphs">C</text></g></svg>
<div class="a cy" style="left:304.1px;top:50.1px;width:93.7px;height:26.7px;border-right:1px solid #cfd0d7;border-bottom:2px solid #c2c3cb"></div>
<svg class="a" style="left:310.7px;top:57px" width="20" height="14" viewBox="0 0 20 14"><g font-family="Liberation Mono,DejaVu Sans Mono,monospace" font-size="9.4"><text x="0.3" y="10" fill="#6f7180" textLength="3.9" lengthAdjust="spacingAndGlyphs">A</text><rect x="5.4" y="-0.2" width="8.6" height="13.4" rx="1.3" fill="#3cae47"/><text x="7.6" y="9.9" fill="#e8f6e9" font-weight="700" textLength="4.2" lengthAdjust="spacingAndGlyphs">B</text><text x="15.4" y="10" fill="#6f7180" textLength="3.9" lengthAdjust="spacingAndGlyphs">C</text></g></svg>
<div class="a cy" style="left:397.8px;top:50.1px;width:94.2px;height:26.7px;border-right:1px solid #cfd0d7;border-bottom:2px solid #c2c3cb"></div>
<svg class="a" style="left:404.4px;top:57px" width="20" height="14" viewBox="0 0 20 14"><g font-family="Liberation Mono,DejaVu Sans Mono,monospace" font-size="9.4"><text x="0.3" y="10" fill="#6f7180" textLength="3.9" lengthAdjust="spacingAndGlyphs">A</text><rect x="5.4" y="-0.2" width="8.6" height="13.4" rx="1.3" fill="#3cae47"/><text x="7.6" y="9.9" fill="#e8f6e9" font-weight="700" textLength="4.2" lengthAdjust="spacingAndGlyphs">B</text><text x="15.4" y="10" fill="#6f7180" textLength="3.9" lengthAdjust="spacingAndGlyphs">C</text></g></svg>
<div class="a " style="left:2px;top:80px;width:20px;height:26px;background:#f4f4f7;border-right:1px solid #c3c4cc;border-bottom:1px solid #cfd0d7"></div>
<svg class="a" style="left:10px;top:88.7px" width="5" height="9.2" viewBox="0 0 5 9.2"><path d="M0 0L5 4.6L0 9.2z" fill="#1d1e26"/></svg>
<div class="a cell c0" style="left:22px;top:80px;width:93.9px;height:26px;"></div>
<div class="a " style="left:22px;top:80px;width:92.9px;height:25.5px;overflow:hidden">
<span class="t" style="left:80.67px;top:4.93px;">1</span>
</div>
<div class="a cell cw" style="left:115.9px;top:80px;width:94.1px;height:26px;"></div>
<div class="a " style="left:115.9px;top:80px;width:93.1px;height:25.5px;overflow:hidden">
<span class="t" style="left:4.8px;top:4.93px;letter-spacing:0.097px;">CLEAN</span>
</div>
<div class="a cell c0" style="left:210px;top:80px;width:94.1px;height:26px;"></div>
<div class="a " style="left:210px;top:80px;width:93.1px;height:25.5px;overflow:hidden">
<span class="t" style="left:4.8px;top:4.93px;letter-spacing:0.102px;">SERV</span>
</div>
<div class="a cell c0" style="left:304.1px;top:80px;width:93.7px;height:26px;"></div>
<div class="a " style="left:304.1px;top:80px;width:92.7px;height:25.5px;overflow:hidden">
<span class="t" style="left:4.8px;top:4.93px;letter-spacing:-0.234px;">Clean Machi...</span>
</div>
<div class="a cell c0" style="left:397.8px;top:80px;width:94.2px;height:26px;"></div>
<span class="t" style="left:403.1px;top:82.33px;letter-spacing:-0.026px;">Post Service</span>
<div class="a " style="left:2px;top:106px;width:20px;height:25.6px;background:#f4f4f7;border-right:1px solid #c3c4cc;border-bottom:1px solid #cfd0d7"></div>
<div class="a cell c1" style="left:22px;top:106px;width:93.9px;height:25.6px;"></div>
<div class="a " style="left:22px;top:106px;width:92.9px;height:25.1px;overflow:hidden">
<span class="t" style="left:80.67px;top:4.93px;">2</span>
</div>
<div class="a cell c1" style="left:115.9px;top:106px;width:94.1px;height:25.6px;"></div>
<div class="a " style="left:115.9px;top:106px;width:93.1px;height:25.1px;overflow:hidden">
<span class="t" style="left:4.8px;top:4.93px;letter-spacing:0.285px;">MAINT</span>
</div>
<div class="a cell c1" style="left:210px;top:106px;width:94.1px;height:25.6px;"></div>
<div class="a " style="left:210px;top:106px;width:93.1px;height:25.1px;overflow:hidden">
<span class="t" style="left:4.8px;top:4.93px;letter-spacing:0.102px;">SERV</span>
</div>
<div class="a cell c1" style="left:304.1px;top:106px;width:93.7px;height:25.6px;"></div>
<div class="a " style="left:304.1px;top:106px;width:92.7px;height:25.1px;overflow:hidden">
<span class="t" style="left:4.8px;top:4.93px;letter-spacing:-0.135px;">Maintain as ...</span>
</div>
<div class="a cell c1" style="left:397.8px;top:106px;width:94.2px;height:25.6px;"></div>
<span class="t" style="left:403.1px;top:108.33px;letter-spacing:-0.146px;">Maintain as</span>
<div class="a " style="left:2px;top:133.2px;width:20px;height:25px;background:#f4f4f7;border-right:1px solid #c3c4cc;border-bottom:1px solid #cfd0d7"></div>
<div class="a cell tl" style="left:22px;top:133.2px;width:93.9px;height:25px;"></div>
<div class="a cell tl" style="left:115.9px;top:133.2px;width:94.1px;height:25px;"></div>
<div class="a cell tl" style="left:210px;top:133.2px;width:94.1px;height:25px;"></div>
<div class="a cell tl" style="left:304.1px;top:133.2px;width:93.7px;height:25px;"></div>
<div class="a cell tl" style="left:397.8px;top:133.2px;width:94.2px;height:25px;"></div>
<svg class="a" style="left:8px;top:142.2px" width="8" height="8" viewBox="0 0 8 8"><path d="M4 0v8M0 4h8M1.2 1.200l5.600 5.600M6.800 1.200L1.200 6.800" stroke="#3d3e49" stroke-width="1.15"/></svg>
</div>
<div id="status" class="a " style="left:6px;top:868px;width:1387px;height:35px;background:linear-gradient(#d9dadf,#cdced4);border-top:1px solid #bcbdc5">
<span class="t" style="left:9.5px;top:8.23px;letter-spacing:-0.017px;">Open Windows</span>
<svg class="a" style="left:104.5px;top:15px" width="8" height="5" viewBox="0 0 8 5"><path d="M0 0h8L4 4.4z" fill="#2a2b35"/></svg>
<div class="a " style="left:842.8px;top:8px;width:1px;height:20px;background:#bbbcc5;box-shadow:1px 0 0 #e0e1e6"></div>
<div class="a " style="left:961.2px;top:8px;width:1px;height:20px;background:#bbbcc5;box-shadow:1px 0 0 #e0e1e6"></div>
<div class="a " style="left:1052px;top:8px;width:1px;height:20px;background:#bbbcc5;box-shadow:1px 0 0 #e0e1e6"></div>
<div class="a " style="left:1174.8px;top:8px;width:1px;height:20px;background:#bbbcc5;box-shadow:1px 0 0 #e0e1e6"></div>
<span class="t" style="left:855.5px;top:8.23px;letter-spacing:0.160px;">User : JulandaK</span>
<span class="t" style="left:970.7px;top:8.23px;letter-spacing:0.080px;">05/08/2021</span>
<span class="t" style="left:1062.3px;top:8.23px;letter-spacing:0.186px;">Version : 2.5.0.3</span>
<span class="t" style="left:1184.7px;top:8.23px;letter-spacing:-0.061px;">Example Company v2.5.0.0</span>
<svg class="a" style="left:1374px;top:20px" width="13" height="13" viewBox="0 0 13 13"><path d="M12 1L1 12M12 5L5 12M12 9L9 12" stroke="#9c9da8" stroke-width="1.2"/></svg>
</div>
<svg id="annot" class="a" style="left:0;top:0" width="1400" height="907" viewBox="0 0 1400 907">
<g fill="none" stroke="#3b63d6">
<rect x="8.2" y="63.2" width="56" height="87.8" stroke-width="2.8"/>
<path d="M226 19.2L394 18.8" stroke-width="2.5"/>
<path d="M225 156.8L82 136.3" stroke-width="2.9"/>
<path d="M762 757.3L893.5 756.2" stroke-width="2.9"/>
<path d="M932.5 730.2H894.2V781.6H932.5" stroke-width="3"/>
</g>
<g fill="#3b63d6">
<path d="M409.8 18.6L391.5 11V26z"/>
<path d="M66.5 134L84.9 129.6L82.9 143.4z"/>
<circle cx="213.8" cy="19.1" r="13.8"/><circle cx="225" cy="156.8" r="14.9"/><circle cx="749" cy="757" r="15"/>
</g>
<g fill="#fff" font-family='"DejaVu Sans Condensed","DejaVu Sans","Liberation Sans",sans-serif' font-stretch="condensed" font-size="16.2" text-anchor="middle">
<text x="213.8" y="25" textLength="20.5">11</text><text x="225.3" y="162.8" textLength="21">13</text><text x="749.4" y="762.8" textLength="20.5" fill="#0c0c18">12</text>
</g></svg>
</body></html>
